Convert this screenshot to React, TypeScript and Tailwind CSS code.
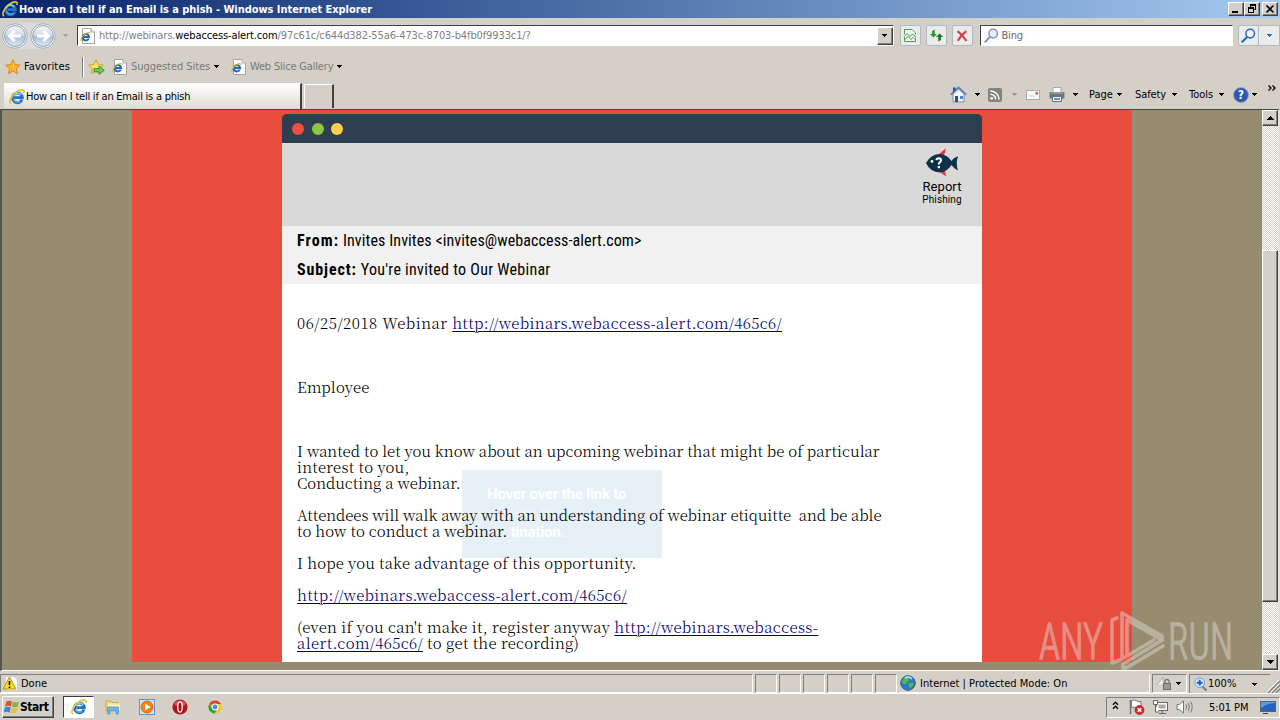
import { ReactNode } from 'react';
import clsx from 'clsx';

/* -------------- small icons -------------------------------- */
function IeIcon({ size = 16 }: { size?: number }) {
  return (
    <svg width={size} height={size} viewBox="0 0 16 16" className="shrink-0">
      <path
        d="M13 10.6A4.9 4.9 0 1 1 13.3 8.6H5.2"
        fill="none"
        stroke="#2373c8"
        strokeWidth="2.9"
      />
      <path d="M4 7A4.8 4.8 0 0 1 12.2 6" fill="none" stroke="#79d0fa" strokeWidth="1.5" />
      <path d="M4.4 10.4A4.8 4.8 0 0 0 11.2 12.4" fill="none" stroke="#4fb2f0" strokeWidth="1.3" />
      <path
        d="M2.2 15C-.9 14 1.8 7.4 6.8 3.6C11 .3 16.2 -.6 14.9 4"
        fill="none"
        stroke="#f0c02c"
        strokeWidth="1.6"
      />
    </svg>
  );
}

function PageIcon() {
  return (
    <svg width="15" height="16" viewBox="0 0 15 16" className="shrink-0">
      <path d="M2.5.5H11L14.5 4V15.5H2.5Z" fill="#fff" stroke="#a5a5a0" />
      <path d="M11 .5V4H14.5" fill="#eee" stroke="#a5a5a0" />
      <path d="M8.8 10.6A3.2 3.2 0 1 1 9.1 9H3.6" fill="none" stroke="#2068be" strokeWidth="2" />
      <path d="M1.4 13.2C-.2 12 2.4 7.6 5.6 5.6C8 4.2 10.4 3.8 9.7 6" fill="none" stroke="#e0b020" strokeWidth="1.1" />
    </svg>
  );
}

function Star({ arrow }: { arrow?: boolean }) {
  return (
    <svg width="17" height="16" viewBox="0 0 17 16" className="shrink-0">
      <path
        d="M8 .8L10.1 5.6L15.2 6.1L11.4 9.6L12.5 14.8L8 12.1L3.4 14.8L4.5 9.6L.7 6.1L5.8 5.6Z"
        fill={arrow ? '#fbe36a' : '#fbb32c'}
        stroke={arrow ? '#c9a226' : '#dc8a1c'}
      />
      <path d="M8 3L9.2 6.6L8 10Z" fill="#ffe28a" />
      {arrow && <path d="M6 9.6H11V7L16.3 11.2L11 15.3V12.8H6Z" fill="#6fd04d" stroke="#2f8f23" strokeWidth=".9" />}
    </svg>
  );
}

function Caret({ className = 'text-black' }: { className?: string }) {
  return (
    <svg width="5" height="3" viewBox="0 0 5 3" className={clsx('shrink-0', className)} shapeRendering="crispEdges">
      <path d="M0 0H5V1H4V2H3V3H2V2H1V1H0Z" fill="currentColor" />
    </svg>
  );
}

function NavArrow({ back }: { back?: boolean }) {
  return (
    <svg width="26" height="26" viewBox="0 0 26 26" className="shrink-0">
      <defs>
        <linearGradient id={back ? 'navB' : 'navF'} x1="0" y1="0" x2="0" y2="1">
          <stop offset="0" stopColor="#f7fafc" />
          <stop offset=".48" stopColor="#ccd8e4" />
          <stop offset=".52" stopColor="#a9bed2" />
          <stop offset="1" stopColor="#dcecf8" />
        </linearGradient>
      </defs>
      <circle cx="13" cy="13" r="12.3" fill="#f4f6f8" stroke="#a2a8af" />
      <circle cx="13" cy="13" r="10.4" fill={`url(#${back ? 'navB' : 'navF'})`} stroke="#8fa3b8" />
      <path
        d={back ? 'M19 13H8M12.6 8L7.6 13L12.6 18' : 'M7 13H18M13.4 8L18.4 13L13.4 18'}
        fill="none"
        stroke="#fff"
        strokeWidth="3"
      />
    </svg>
  );
}

function Magnifier({ color, glass = '#e2eefa' }: { color: string; glass?: string }) {
  return (
    <svg width="15" height="15" viewBox="0 0 15 15" className="shrink-0">
      <path d="M6.3 8.7L1.3 13.7" stroke={color} strokeWidth="2" strokeLinecap="round" />
      <circle cx="9.2" cy="5.6" r="4.3" fill={glass} stroke={color} strokeWidth="1.5" />
    </svg>
  );
}

/* -------------- window chrome ------------------------------ */
const raised =
  'border border-t-white border-l-white border-r-[#404040] border-b-[#404040] bg-[#d4d0c8] shadow-[inset_-1px_-1px_0_#808080]';

function CaptionButton({ children, className }: { children: ReactNode; className?: string }) {
  return (
    <span className={clsx('flex h-[14px] w-4 items-center justify-center', raised, className)}>
      <svg width="10" height="10" viewBox="0 0 10 10" stroke="#000" fill="none" shapeRendering="crispEdges">
        {children}
      </svg>
    </span>
  );
}

function TitleBar() {
  return (
    <header className="flex h-[18px] shrink-0 items-center bg-linear-to-r from-[#0a246a] to-[#a6caf0] pl-[2px] text-white">
      <IeIcon />
      <span className="ml-px pt-px font-bold tracking-[-0.04px]">
        How can I tell if an Email is a phish - Windows Internet Explorer
      </span>
      <span className="mr-[2px] ml-auto flex">
        <CaptionButton>
          <path d="M1 8H7" strokeWidth="2" />
        </CaptionButton>
        <CaptionButton>
          <path d="M3.5 3V.5H8.5V5.5H7M3 1.5H9M1.5 3.5H6.5V8.5H1.5ZM1 4.5H7" />
        </CaptionButton>
        <CaptionButton className="ml-[2px]">
          <path d="M1.5 1.5L8.5 8.5M8.5 1.5L1.5 8.5" strokeWidth="1.6" shapeRendering="auto" />
        </CaptionButton>
      </span>
    </header>
  );
}

function ToolButton({ children, className }: { children: ReactNode; className?: string }) {
  return (
    <span
      className={clsx(
        'flex h-[21px] w-[21px] items-center justify-center rounded-[2px] border border-[#b3b9c1] bg-[#e9ebed]',
        className
      )}
    >
      {children}
    </span>
  );
}

function AddressRow() {
  return (
    <div className="flex h-[35px] shrink-0 items-center pl-[2px]">
      <div className="flex gap-[2px] rounded-full bg-[#dcdcdc]">
        <NavArrow back />
        <NavArrow />
      </div>
      <Caret className="ml-[7px] text-[#aaa69e]" />
      <div className="ml-[9px] flex h-[21px] w-[818px] items-center border border-t-[#404040] border-r-white border-b-white border-l-[#404040] bg-white pl-[2px]">
        <PageIcon />
        <span className="ml-1 pt-px tracking-[-0.12px] text-[#808080]">
          http://webinars.<span className="text-black">webaccess-alert.com</span>
          /97c61c/c644d382-55a6-473c-8703-b4fb0f9933c1/?
        </span>
        <span className={clsx('ml-auto flex h-[18px] w-4 items-center justify-center', raised)}>
          <Caret />
        </span>
      </div>
      <ToolButton className="ml-[6px]">
        <svg width="14" height="15" viewBox="0 0 14 15" fill="none" stroke="#4c9a50">
          <path d="M1.5 6V1.5H9L12.5 5V6.5M1.5 9V13.5H12.5V10" fill="#f4fbf4" />
          <path d="M1 8.5L4 5.5L7 8.5L9.5 6L13 9M2 11.5L5 8.5L8 11.5L10 9.5L12 11.5" />
        </svg>
      </ToolButton>
      <ToolButton className="ml-[5px]">
        <svg width="15" height="15" viewBox="0 0 15 15" fill="#2f9a35">
          <path d="M3 6V3.2L5.8 1.6V6H8L4.4 9.6L.8 6Z" />
          <path d="M9.2 13.6L12 12V9H14.2L10.6 5.4L7 9H9.2Z" fill="#247a2a" />
        </svg>
      </ToolButton>
      <ToolButton className="ml-[5px]">
        <svg width="12" height="12" viewBox="0 0 12 12">
          <path d="M1.5 1.2Q6 4.5 10.5 10.8M10.3 1.2Q5 5 1.8 10.8" fill="none" stroke="#cf4444" strokeWidth="2.2" />
        </svg>
      </ToolButton>
      <div className="ml-[7px] flex h-[21px] w-[254px] items-center border border-t-[#404040] border-r-white border-b-white border-l-[#404040] bg-white pl-[3px]">
        <Magnifier color="#8a97a8" />
        <span className="ml-[3px] pt-px tracking-[-0.2px] text-[#6d6d6d]">Bing</span>
      </div>
      <ToolButton className="ml-[5px] rounded-r-none">
        <Magnifier color="#2866c4" glass="#f3f8ff" />
      </ToolButton>
      <ToolButton className="w-[13px] rounded-l-none border-l-0">
        <Caret className="text-[#2866c4]" />
      </ToolButton>
    </div>
  );
}

function FavoritesRow() {
  return (
    <div className="flex h-[27px] shrink-0 items-center pl-[5px]">
      <Star />
      <span className="ml-[2px] w-[58px] tracking-[0.15px]">Favorites</span>
      <span className="h-[20px] w-px bg-[#808080]" />
      <span className="mr-[4px] h-[20px] w-px bg-white" />
      <Star arrow />
      <span className="ml-[7px] flex items-center">
        <PageIcon />
        <span className="ml-1 w-[83px] pt-px tracking-[-0.05px] text-[#7d7a74]">Suggested Sites</span>
        <Caret />
      </span>
      <span className="ml-[12px] flex items-center">
        <PageIcon />
        <span className="ml-1 w-[87px] pt-px tracking-[-0.18px] text-[#7d7a74]">Web Slice Gallery</span>
        <Caret />
      </span>
    </div>
  );
}

function CommandBar() {
  return (
    <div className="flex h-[29px] w-[330px] items-center">
      <svg width="17" height="17" viewBox="0 0 17 17" className="shrink-0">
        <path d="M3 8V16H14V8L8.5 3Z" fill="#f4f6fa" stroke="#7c8cab" />
        <path d="M.8 8.6L8.5 1.4L16.2 8.6" fill="none" stroke="#5a7cc0" strokeWidth="1.7" />
        <path d="M3 1.5H5.5V4L3 6.2Z" fill="#2f4f9a" />
        <path d="M5 10H8V16H5Z" fill="#2b4d92" />
        <path d="M10 10H13V13H10Z" fill="#4f87cc" />
      </svg>
      <Caret className="ml-[8px] text-black" />
      <svg width="14" height="14" viewBox="0 0 14 14" className="ml-[8px] shrink-0">
        <rect width="14" height="14" rx="2" fill="#85837f" />
        <circle cx="3.7" cy="10.3" r="1.4" fill="#fff" />
        <path d="M2.4 6.3A5.2 5.2 0 0 1 7.7 11.6M2.4 3A8.6 8.6 0 0 1 11 11.6" fill="none" stroke="#fff" strokeWidth="1.5" />
      </svg>
      <Caret className="ml-[10px] text-[#9d9a93]" />
      <svg width="14" height="10" viewBox="0 0 14 10" className="ml-[9px] shrink-0">
        <rect x=".5" y=".5" width="13" height="9" fill="#f8f8f6" stroke="#b0ada6" />
        <rect x="9.5" y="2" width="2.6" height="2.6" fill="#cf5b5b" />
        <path d="M3 6H8" stroke="#c9c9c9" />
      </svg>
      <svg width="16" height="15" viewBox="0 0 16 15" className="ml-[9px] shrink-0">
        <path d="M4 .5H12V6H4Z" fill="#fff" stroke="#a5a5a5" />
        <rect x=".5" y="5" width="15" height="6.5" rx="1" fill="#707478" />
        <path d="M2 6H14" stroke="#b9bdc1" />
        <path d="M3.5 9.5H12.5V14.5H3.5Z" fill="#eef7fb" stroke="#6a7075" />
        <path d="M5 12H11" stroke="#4ba3c9" strokeWidth="2" />
      </svg>
      <Caret className="ml-2 text-black" />
      <span className="ml-[11px] w-[28px]">Page</span>
      <Caret />
      <span className="ml-[13px] w-[37px] tracking-[-0.1px]">Safety</span>
      <Caret />
      <span className="ml-3 w-[30px]">Tools</span>
      <Caret />
      <span className="ml-[9px] flex h-4 w-4 shrink-0 items-center justify-center rounded-full border border-[#8ea2c8] bg-[#2f55b0] text-[12px] font-bold text-white">
        ?
      </span>
      <Caret className="ml-[3px] text-black" />
      <svg width="8" height="6" viewBox="0 0 8 6" className="mb-[14px] ml-[11px] shrink-0">
        <path d="M.5 .5L3 3L.5 5.5M4.5 .5L7 3L4.5 5.5" fill="none" stroke="#000" strokeWidth="1.3" />
      </svg>
    </div>
  );
}

function TabRow() {
  return (
    <div className="flex h-[29px] shrink-0 items-start pl-[4px]">
      <div className="mt-[3px] flex h-[26px] w-[298px] items-center border-t border-r-2 border-t-white border-r-[#404040] bg-linear-to-b from-white to-[#dedbd4] pl-[5px]">
        <IeIcon />
        <span className="ml-px tracking-[-0.23px]">How can I tell if an Email is a phish</span>
      </div>
      <div className="mt-[4px] ml-[2px] h-[24px] w-[30px] border-t border-r-2 border-l border-t-white border-r-[#404040] border-l-white" />
      <div className="ml-auto shrink-0">
        <CommandBar />
      </div>
    </div>
  );
}

/* -------------- page --------------------------------------- */
function FishLogo() {
  return (
    <svg width="34" height="29" viewBox="0 0 34 29">
      <path d="M13 7L21 .2L19 7.5ZM15 24L21 28.5L20 22Z" fill="#e8333c" />
      <path
        d="M1 15Q6 6 15 6Q22 6.5 26.5 13Q29 9 33 8.5Q30.5 15 33 22.5Q29 21 26.5 17Q22 24 15 24.5Q5 24 1 15Z"
        fill="#0c3148"
      />
      <circle cx="7" cy="13.4" r="1.4" fill="#fff" />
      <path d="M11.4 12.2Q11.6 10.2 13.7 10.2Q16 10.3 16 12.3Q15.9 13.6 14.7 14.4Q13.8 15 13.8 16.6" fill="none" stroke="#fff" strokeWidth="2" />
      <path d="M12.7 18H15V20.2H12.7Z" fill="#fff" />
    </svg>
  );
}

function Url({ children }: { children: ReactNode }) {
  return (
    <a className="tracking-[0.36px] text-[#000066] underline decoration-1 underline-offset-2">{children}</a>
  );
}

function Watermark() {
  return (
    <svg
      width="204"
      height="66"
      viewBox="0 0 204 66"
      className="absolute top-[608px] left-[1036px] overflow-visible opacity-45"
      fill="#e4e0da"
    >
      <g className="font-['Roboto_Condensed'] font-light" fontSize="50" stroke="#e4e0da" strokeWidth="1.3">
        <text x="3" y="51" textLength="64" lengthAdjust="spacingAndGlyphs">
          ANY
        </text>
        <text x="132" y="51" textLength="65" lengthAdjust="spacingAndGlyphs">
          RUN
        </text>
      </g>
      <g fill="none" stroke="#e4e0da" strokeWidth="3.6" strokeLinejoin="round" strokeLinecap="round">
        <path d="M81 10L76 12V55L84 52L118 32" />
        <path d="M86 49V5L126 28V32L91 12" />
        <path d="M91 12V47M126 32L87 56V61L92 59L127 38" />
      </g>
    </svg>
  );
}

function MailWindow() {
  return (
    <div className="relative h-full w-[700px] pt-[4px] font-['Roboto_Condensed',Roboto,sans-serif] text-[16px] tracking-[0.1px]">
      <div className="flex h-[29px] items-center gap-2 rounded-t-[5px] bg-[#2e3e50] pl-[10px]">
        <i className="h-3 w-3 rounded-full bg-[#ec5043]" />
        <i className="h-3 w-3 rounded-full bg-[#8cc63f]" />
        <i className="-ml-px h-3 w-3 rounded-full bg-[#fdd04b]" />
      </div>
      <div className="flex h-[83px] justify-end bg-[#d9d9d9] pt-[5px] pr-[20px] font-[Roboto]">
        <div className="flex w-[40px] flex-col items-center whitespace-nowrap">
          <FishLogo />
          <span className="mt-[2px] text-[13px] leading-[15px] tracking-[0.05px]">Report</span>
          <span className="text-[10px] leading-[11px]">Phishing</span>
        </div>
      </div>
      <div className="h-[58px] bg-[#f1f1f1] pl-[15px] leading-[29px] text-black">
        <p>
          <b className="tracking-[1.1px]">From:</b> Invites Invites &lt;invites@webaccess-alert.com&gt;
        </p>
        <p>
          <b className="tracking-[0.9px]">Subject:</b>
          <span className="tracking-[0.28px]"> You're invited to Our Webinar</span>
        </p>
      </div>
      <div className="h-[378px] bg-white pt-[31px] pl-[15px]">
        {/* fading hint, the letter's text stays above it */}
        <div className="absolute top-[360px] left-[180px] h-[88px] w-[200px] bg-[#e5f1f7] px-[25px] pt-[15px] font-[Roboto] text-[15px] leading-[19px] font-bold tracking-[-0.2px] whitespace-nowrap text-white">
          Hover over the link to
          <br />
          <span className="text-[#eaf4f9]">view its true</span>
          <br />
          <span className="text-[#e9f3f8]">des</span>tination.
        </div>
        <div className="relative font-['Noto_Serif_CJK_SC','Liberation_Serif',serif] text-[15px] leading-[16px] font-light tracking-[0.01px] whitespace-pre text-black">
          <p className="mb-[48px] tracking-[0.56px]">
            06/25/2018 Webinar <Url>http://webinars.webaccess-alert.com/465c6/</Url>
          </p>
          <p className="mb-[48px] tracking-[0.15px]">Employee</p>
          <p>I wanted to let you know about an upcoming webinar that might be of particular</p>
          <p className="tracking-[0.25px]">interest to you,</p>
          <p className="mb-4">Conducting a webinar.</p>
          <p className="tracking-[-0.05px]">
            Attendees will walk away with an understanding of webinar etiquitte  and be able
          </p>
          <p className="mb-4 tracking-[0.05px]">to how to conduct a webinar.</p>
          <p className="mb-4 tracking-[0.17px]">I hope you take advantage of this opportunity.</p>
          <p className="mb-4">
            <Url>http://webinars.webaccess-alert.com/465c6/</Url>
          </p>
          <p className="tracking-[0.28px]">
            (even if you can't make it, register anyway <Url>http://webinars.webaccess-</Url>
          </p>
          <p className="tracking-[0.24px]">
            <Url>alert.com/465c6/</Url> to get the recording)
          </p>
        </div>
      </div>
    </div>
  );
}

function ScrollBar() {
  return (
    <div className="flex w-4 flex-col bg-[repeating-conic-gradient(#d4d0c8_0_25%,#fff_0_50%)] bg-size-[2px_2px]">
      <span className={clsx('flex h-4 items-center justify-center', raised)}>
        <svg width="7" height="4" viewBox="0 0 7 4" shapeRendering="crispEdges">
          <path d="M3 0H4V1H5V2H6V3H7V4H0V3H1V2H2V1H3Z" />
        </svg>
      </span>
      <span className={clsx('mt-[124px] h-[352px]', raised)} />
      <span className={clsx('mt-auto flex h-4 items-center justify-center', raised)}>
        <svg width="7" height="4" viewBox="0 0 7 4" shapeRendering="crispEdges">
          <path d="M0 0H7V1H6V2H5V3H4V4H3V3H2V2H1V1H0Z" />
        </svg>
      </span>
    </div>
  );
}

/* -------------- bottom bars -------------------------------- */
const sunken = 'border border-t-[#808080] border-l-[#808080] border-r-white border-b-white';

function StatusBar() {
  return (
    <div className="mt-[3px] flex h-[19px] shrink-0 gap-[2px] pr-[10px]">
      <span className={clsx('flex w-[753px] items-center', sunken)}>
        <svg width="16" height="15" viewBox="0 0 16 15" className="ml-px">
          <path d="M4 1H12L15 4V14H4Z" fill="#fff" />
          <path d="M7.5 1L14 13H1Z" fill="#f8dc2a" stroke="#b3970f" />
          <path d="M7.5 5V9M7.5 10.5V12" stroke="#000" strokeWidth="1.6" />
        </svg>
        <span className="ml-[3px]">Done</span>
      </span>
      {[0, 1, 2, 3, 4, 5].map((i) => (
        <span key={i} className={clsx('w-[22px]', sunken)} />
      ))}
      <span className="flex w-[251px] items-center border-r border-b border-white pl-px">
        <svg width="16" height="16" viewBox="0 0 16 16">
          <circle cx="8" cy="8" r="7.3" fill="#2877c9" stroke="#3d6385" />
          <path d="M3 4Q7 0 9 3Q10 6 7 7Q6 10 3.5 9Q1 7 3 4ZM9 8Q14 7 13.5 10Q11 14 9.5 13Q8 10 9 8Z" fill="#55b748" />
          <path d="M5 3Q9 .5 12 4" fill="none" stroke="#bfe6ff" strokeWidth="1.5" />
        </svg>
        <span className="ml-1 pt-px tracking-[0.02px]">Internet | Protected Mode: On</span>
      </span>
      <span className={clsx('flex w-[35px] items-center', sunken)}>
        <svg width="17" height="15" viewBox="0 0 17 15" className="ml-[2px]">
          <path d="M2 9L8 1V6L12 7" fill="#f2f2f2" stroke="#aaa" />
          <rect x="8.5" y="7.5" width="7" height="6" fill="#999" stroke="#6e6e6e" />
          <path d="M10 7V5.5A2 2 0 0 1 14 5.5V7" fill="none" stroke="#777" strokeWidth="1.3" />
        </svg>
        <Caret className="ml-1 text-black" />
      </span>
      <span className="flex flex-1 items-center border-t border-l border-[#808080]">
        <svg width="14" height="15" viewBox="0 0 14 15" className="ml-[4px]">
          <path d="M8 9L12.5 13.5" stroke="#77808c" strokeWidth="2.2" />
          <circle cx="5.7" cy="5.7" r="4.8" fill="#dcecff" stroke="#6b9bd8" />
          <path d="M5.7 2.8V8.6M2.8 5.7H8.6" stroke="#1e5cc4" strokeWidth="2" />
        </svg>
        <span className="w-[44px]">100%</span>
        <Caret />
        <svg width="13" height="13" viewBox="0 0 13 13" className="-mr-[10px] mt-1 ml-auto shrink-0">
          <path d="M1 13L13 1M5 13L13 5M9 13L13 9" stroke="#808080" strokeWidth="1.4" />
          <path d="M0 12L12 0M4 12L12 4" stroke="#fff" />
        </svg>
      </span>
    </div>
  );
}

function TaskBar() {
  return (
    <footer className="mt-auto flex h-[27px] shrink-0 items-center border-t border-white pl-[2px]">
      <button className={clsx('flex h-[22px] w-[52px] items-center font-bold', raised)}>
        <svg width="16" height="16" viewBox="0 0 16 16" className="ml-px shrink-0">
          <path d="M2.5 2.5Q5 .8 8 2.5L7 7.4Q4 6 1 7.3Z" fill="#e2532b" />
          <path d="M9 2.8Q12 4 15 2.4L13.7 7.4Q11 9 8 7.8Z" fill="#79b943" />
          <path d="M1 8.4Q4 7 6.8 8.5L5.6 13.4Q3 12-.2 13.4Z" fill="#3f83d6" />
          <path d="M7.8 9Q10.5 10.2 13.4 8.6L12.2 13.4Q9.4 15 6.5 13.9Z" fill="#f4bd2c" />
        </svg>
        <span className="text-[12px] tracking-[-0.45px]">Start</span>
      </button>
      <span className="ml-[9px] flex h-[22px] w-[31px] items-center justify-center border border-t-[#404040] border-r-white border-b-white border-l-[#404040] bg-white">
        <IeIcon />
      </span>
      <svg width="16" height="16" viewBox="0 0 16 16" className="ml-[11px]">
        <path d="M1 2H6L7 3.5H13V12H1Z" fill="#f2d675" stroke="#c9a949" />
        <path d="M3 4.5H15V12H3Z" fill="#fbeeb0" />
        <path d="M2.5 8H13.5V15H11V11.5H5V15H2.5Z" fill="#6cb5e4" stroke="#4b93c8" strokeWidth=".7" />
      </svg>
      <svg width="16" height="16" viewBox="0 0 16 16" className="ml-[18px]">
        <rect x=".5" y=".5" width="15" height="15" fill="#cfe3f7" stroke="#5f97cf" />
        <circle cx="8" cy="8" r="6" fill="#f08419" stroke="#d96f0b" />
        <path d="M6 4.5L11.5 8L6 11.5Z" fill="#fff" />
      </svg>
      <svg width="16" height="16" viewBox="0 0 16 16" className="ml-[17px]">
        <circle cx="8" cy="8" r="7.6" fill="#b3151c" />
        <ellipse cx="8" cy="4.5" rx="5.5" ry="3" fill="#d9595c" />
        <ellipse cx="8" cy="8" rx="2.2" ry="5.2" fill="#a01016" stroke="#fff" strokeWidth="1.3" />
      </svg>
      <svg width="14" height="14" viewBox="0 0 16 16" className="ml-[20px]">
        <circle cx="8" cy="8" r="7.5" fill="#f6c91c" />
        <path d="M8 8L1.5 4.2A7.5 7.5 0 0 1 14.7 4.7H8Z" fill="#dd4436" />
        <path d="M1.5 4.2A7.5 7.5 0 0 0 7.6 15.5L11 9.5L8 8H4Z" fill="#2da04e" />
        <circle cx="8" cy="8" r="3.4" fill="#4a88ee" stroke="#fff" strokeWidth="1.2" />
      </svg>
      <div className={clsx('ml-auto flex h-[21px] w-[174px] items-center', sunken)}>
        <svg width="7" height="9" viewBox="0 0 7 9" className="mb-[3px] ml-[5px]">
          <path d="M1 3.7L3.5 1.2L6 3.7M1 7.7L3.5 5.2L6 7.7" fill="none" stroke="#000" strokeWidth="1.3" />
        </svg>
        <svg width="17" height="16" viewBox="0 0 17 16" className="ml-[9px]">
          <path d="M2.5 1V15" stroke="#777" strokeWidth="1.6" />
          <path d="M3.5 1.5Q7 0 9 2Q11 3.5 13 2.5V9Q10 10 8 8.5Q6 7.5 3.5 8.5Z" fill="#fff" stroke="#777" />
          <circle cx="11.5" cy="11" r="4.4" fill="#d92b2b" stroke="#b31a1a" />
          <path d="M9.7 9.2L13.3 12.8M13.3 9.2L9.7 12.8" stroke="#fff" strokeWidth="1.5" />
        </svg>
        <svg width="16" height="16" viewBox="0 0 16 16" className="ml-[7px]" stroke="#666">
          <rect x="4.5" y="3.5" width="11" height="8" fill="#fff" />
          <rect x="6.5" y="5.5" width="7" height="4" fill="#a8a8a8" stroke="none" />
          <path d="M7 14.5H14M10 12V14" />
          <path d="M1.5 1.5H5.5V5.5H1.5ZM3.5 5.5V13H7" fill="#fff" />
        </svg>
        <svg width="18" height="14" viewBox="0 0 18 14" className="ml-[8px]" fill="none" stroke="#777">
          <path d="M1 4.5H3.5L7.5 1V13L3.5 9.5H1Z" fill="#fff" />
          <path d="M10 4.5Q11.5 7 10 9.5M12.3 3Q14.6 7 12.3 11M14.6 1.5Q17.8 7 14.6 12.5" />
        </svg>
        <span className="ml-[15px] w-[41px] pt-px tracking-[-0.05px] whitespace-nowrap">5:01 PM</span>
        <svg width="16" height="15" viewBox="0 0 16 15" className="ml-[10px] shrink-0">
          <rect x=".5" y="1.5" width="15" height="10" fill="#2462bd" stroke="#55657d" />
          <path d="M1 8Q8 3 15 3V2H1Z" fill="#5b9ae2" />
          <path d="M3 13H8V14H3Z" fill="#444" />
        </svg>
      </div>
    </footer>
  );
}

export default function App() {
  return (
    <div className="relative flex h-[720px] w-[1280px] flex-col overflow-hidden bg-[#d4d0c8] font-['DejaVu_Sans_Condensed','DejaVu_Sans',sans-serif] text-[11px] leading-[14px] whitespace-nowrap text-black">
      <TitleBar />
      <AddressRow />
      <FavoritesRow />
      <TabRow />
      <main className="flex h-[562px] shrink-0 border-t border-r-2 border-b border-l-2 border-t-[#444] border-r-[#e4e1db] border-b-white border-l-[#555] bg-[#978b70]">
        <div className="flex flex-1 justify-center">
          <div className="flex h-[552px] w-[1000px] justify-center overflow-hidden bg-[#e84c3d]">
            <MailWindow />
          </div>
        </div>
        <ScrollBar />
      </main>
      <StatusBar />
      <TaskBar />
      <Watermark />
    </div>
  );
}
